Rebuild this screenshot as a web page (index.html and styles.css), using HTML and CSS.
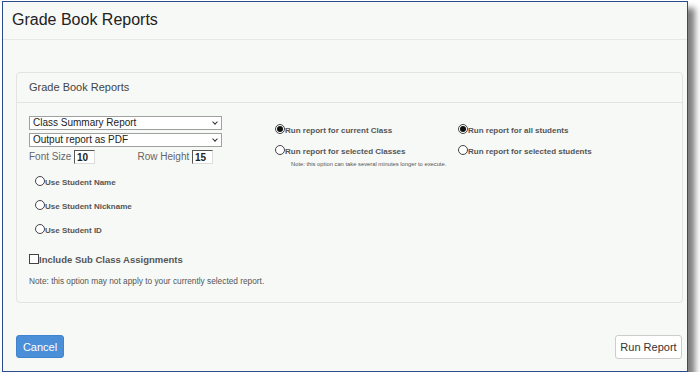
FILE: index.html
```html
<!DOCTYPE html>
<html lang="en">
<head>
  <meta charset="UTF-8" />
  <title>Grade Book Reports</title>
  <link rel="stylesheet" href="styles.css">
</head>
<body>

  <div class="window">
    <div class="title-bar">
      <h1>Grade Book Reports</h1>
    </div>

    <div class="content">
      <div class="panel">
        <div class="panel-heading">Grade Book Reports</div>
        <div class="panel-body">

          <div class="col-left">
            <div class="select">Class Summary Report<span class="caret"></span></div>
            <div class="select">Output report as PDF<span class="caret"></span></div>
            <div class="sizes">
              <span class="field">Font Size <span class="box">10</span></span>
              <span class="field">Row Height <span class="box">15</span></span>
            </div>
            <div class="opt"><span class="radio"></span>Use Student Name</div>
            <div class="opt"><span class="radio"></span>Use Student Nickname</div>
            <div class="opt"><span class="radio"></span>Use Student ID</div>
            <div class="check"><span class="checkbox"></span>Include Sub Class Assignments</div>
            <div class="note">Note: this option may not apply to your currently selected report.</div>
          </div>

          <div class="col-mid">
            <div class="run"><span class="radio on"></span>Run report for current Class</div>
            <div class="run"><span class="radio"></span>Run report for selected Classes</div>
            <div class="small-note">Note: this option can take several minutes longer to execute.</div>
          </div>

          <div class="col-right">
            <div class="run"><span class="radio on"></span>Run report for all students</div>
            <div class="run"><span class="radio"></span>Run report for selected students</div>
          </div>

        </div>
      </div>
    </div>

    <div class="footer">
      <button class="btn btn-blue">Cancel</button>
      <button class="btn">Run Report</button>
    </div>
  </div>

</body>
</html>
```

FILE: styles.css
```css
body {
  margin: 0;
  background: #fff;
  font-family: 'Liberation Sans', Arial, sans-serif;
  color: #333;
}

.window {
  margin: 1px 0 0 2px;
  width: 684px;
  height: 369px;
  border: 1px solid #2c4a8c;
  background: #f7f9f7;
  box-shadow: 7px 7px 6px rgba(0, 0, 0, 0.5);
  display: flex;
  flex-direction: column;
}

.title-bar {
  height: 38px;
  border-bottom: 1px solid #e6e8e6;
  padding-left: 9px;
  box-sizing: border-box;
}

h1 {
  margin: 0;
  padding-top: 9px;
  font-size: 16px;
  font-weight: normal;
  color: #222;
}

.content {
  padding: 32px 0 0 13px;
}

.panel {
  width: 665px;
  height: 229px;
  border: 1px solid #e2e4e2;
  border-radius: 4px;
}

.panel-heading {
  height: 29px;
  border-bottom: 1px solid #e2e4e2;
  padding-left: 12px;
  font-size: 11px;
  line-height: 29px;
  color: #444;
}

.panel-body {
  display: flex;
  padding: 13px 0 0 12px;
}

.col-left {
  width: 193px;
}

.select {
  position: relative;
  height: 12px;
  border: 1px solid #a0a0a0;
  background: #fff;
  font-size: 10px;
  line-height: 12px;
  padding-left: 3px;
  color: #222;
  margin-bottom: 3px;
}

.caret {
  position: absolute;
  right: 4px;
  top: 3px;
  width: 3px;
  height: 3px;
  border-right: 1px solid #333;
  border-bottom: 1px solid #333;
  transform: rotate(45deg);
}

.sizes {
  display: flex;
  justify-content: space-between;
  padding-right: 9px;
  margin-top: 2px;
  font-size: 10px;
  color: #666;
}

.box {
  display: inline-block;
  width: 17px;
  height: 12px;
  line-height: 13px;
  padding-left: 2px;
  border-top: 1px solid #555;
  border-left: 1px solid #555;
  border-right: 1px solid #ddd;
  border-bottom: 1px solid #ddd;
  background: #fff;
  color: #222;
  font-weight: bold;
  vertical-align: middle;
}

.radio {
  display: inline-block;
  width: 8px;
  height: 8px;
  border: 1px solid #444;
  border-radius: 50%;
  background: #fff;
  position: relative;
  vertical-align: -1px;
}

.radio.on::after {
  content: '';
  position: absolute;
  left: 1px;
  top: 1px;
  width: 6px;
  height: 6px;
  border-radius: 50%;
  background: #111;
}

.opt {
  margin: 12px 0 0 6px;
  font-size: 8px;
  font-weight: bold;
  color: #555;
  height: 10px;
}

.opt + .opt {
  margin-top: 14px;
}

.check {
  margin-top: 20px;
  font-size: 9.5px;
  font-weight: bold;
  color: #555;
}

.checkbox {
  display: inline-block;
  width: 8px;
  height: 8px;
  border: 1px solid #444;
  background: #fff;
  vertical-align: -1px;
}

.note {
  margin-top: 11px;
  font-size: 8.3px;
  color: #555;
  white-space: nowrap;
}

.col-mid {
  margin-left: 53px;
  width: 183px;
  padding-top: 8px;
}

.col-right {
  padding-top: 8px;
}

.run {
  font-size: 8px;
  font-weight: bold;
  color: #555;
  height: 11px;
  margin-bottom: 10px;
}

.small-note {
  margin: -5px 0 0 16px;
  font-size: 5.8px;
  color: #555;
  white-space: nowrap;
}

.footer {
  display: flex;
  justify-content: space-between;
  padding: 32px 5px 0 13px;
}

.btn {
  width: 67px;
  height: 24px;
  padding: 0;
  border: 1px solid #ccc;
  border-radius: 3px;
  background: #fff;
  font-family: 'Liberation Sans', Arial, sans-serif;
  font-size: 11px;
  color: #333;
}

.btn-blue {
  width: 48px;
  height: 23px;
  background: #4a8fd8;
  border-color: #3f84cf;
  color: #fff;
}
```
